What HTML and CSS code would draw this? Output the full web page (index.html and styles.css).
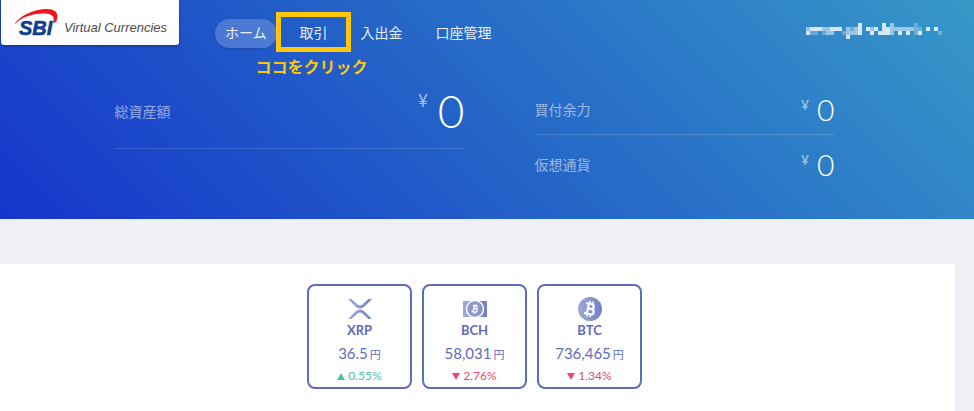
FILE: index.html
```html
<!DOCTYPE html>
<html lang="ja">
<head>
<meta charset="utf-8">
<meta name="viewport" content="width=device-width, initial-scale=1">
<title>SBI Virtual Currencies</title>
<link rel="stylesheet" href="styles.css">
</head>
<body>

<header class="header">
  <div class="topbar">
    <a class="logo" href="#">
      <svg class="logo-mark" viewBox="0 0 44 28" aria-hidden="true">
        <path d="M0 16C5 7 19 0 33 0c9 0 13 5 9 13l-3 1c2-6 0-9-8-9.500C19 4 7 8 0 16z" fill="#f5141e"/>
        <text class="logo-sbi" x="5" y="26">SBI</text>
      </svg>
      <span class="logo-name">Virtual Currencies</span>
    </a>
    <nav class="nav">
      <a class="nav-link is-current" href="#">ホーム</a>
      <a class="nav-link has-callout" href="#">取引<span class="callout-box"></span><span class="callout-text">ココをクリック</span></a>
      <a class="nav-link" href="#">入出金</a>
      <a class="nav-link" href="#">口座管理</a>
    </nav>
    <!-- masked user name -->
    <svg class="user" viewBox="0 0 34 4" shape-rendering="crispEdges" role="img" aria-label="ユーザー">
      <g fill="#fff">
        <path opacity=".8" d="M13 0h1v3h-1zM19 0h1v3h-1zM1 1h3v1h-3zM6 1h3v1h-3zM15 1h1v1h-1zM17 1h1v1h-1zM20 1h1v2h-1zM30 1h1v1h-1zM32 1h1v1h-1zM0 2h1v1h-1zM16 2h1v1h-1zM18 2h1v1h-1zM23 2h1v1h-1zM25 2h1v1h-1zM28 2h1v1h-1zM10 3h1v1h-1z"/>
        <path opacity=".5" d="M0 1h1v1h-1zM4 1h2v1h-2zM6 2h1v1h-1zM5 2h1v1h-1zM10 1h1v2h-1zM11 2h2v1h-2zM12 1h1v1h-1zM16 1h1v1h-1zM21 0h1v3h-1zM22 1h2v1h-2zM24 1h3v1h-3z"/>
        <path opacity=".28" d="M1 2h2v1h-2zM4 2h1v1h-1zM9 2h1v1h-1zM11 1h1v1h-1zM27 0h1v3h-1zM28 1h1v1h-1zM33 2h1v1h-1z"/>
      </g>
    </svg>
  </div>

  <div class="summary">
    <dl class="total">
      <div class="amount amount-large">
        <dt>総資産額</dt>
        <dd><span class="yen">¥</span><span class="value">0</span></dd>
      </div>
    </dl>
    <dl class="detail">
      <div class="amount">
        <dt>買付余力</dt>
        <dd><span class="yen">¥</span><span class="value">0</span></dd>
      </div>
      <div class="amount">
        <dt>仮想通貨</dt>
        <dd><span class="yen">¥</span><span class="value">0</span></dd>
      </div>
    </dl>
  </div>
</header>

<svg class="defs" width="0" height="0" aria-hidden="true">
  <defs>
    <linearGradient id="coin" x1="0" y1="0" x2="1" y2="0">
      <stop offset="0" stop-color="#a0aad8"/>
      <stop offset="1" stop-color="#7480c2"/>
    </linearGradient>
    <g id="bitcoin" fill="none" stroke="#fff" transform="rotate(12)">
      <path stroke-width="2.200" d="M-5-5H.8a2.400 2.400 0 0 1 0 4.800H-2M-2-.2h3.600a2.600 2.600 0 0 1 0 5.200H-5M-2.200-5V5"/>
      <path stroke-width="1.600" d="M-1.500-8v3M1.700-8v3M-1.500 5v3M1.700 5v3"/>
    </g>
  </defs>
</svg>

<main class="content">
  <ul class="rates">
    <li class="rate">
      <svg class="rate-icon" viewBox="0 0 24 24" aria-hidden="true">
        <path d="M0 2h3.500l6 5.500q2.500 2.200 5 0l6-5.500H24l-7.500 7.500q-4.500 3.800-9 0zM0 22h3.500l6-5.500q2.500-2.200 5 0l6 5.500H24l-7.500-7.500q-4.500-3.800-9 0z" fill="url(#coin)"/>
      </svg>
      <h2 class="rate-name">XRP</h2>
      <p class="rate-price">36.5<small>円</small></p>
      <p class="rate-change up">0.55%</p>
    </li>
    <li class="rate">
      <svg class="rate-icon" viewBox="0 0 24 24" aria-hidden="true">
        <path d="M0 4h24v16H0z" fill="url(#coin)"/>
        <circle cx="12" cy="12" r="8.500" fill="#8c97cd" stroke="#fff" stroke-width="1.500"/>
        <use href="#bitcoin" transform="translate(12 12) scale(.6)"/>
      </svg>
      <h2 class="rate-name">BCH</h2>
      <p class="rate-price">58,031<small>円</small></p>
      <p class="rate-change down">2.76%</p>
    </li>
    <li class="rate">
      <svg class="rate-icon" viewBox="0 0 24 24" aria-hidden="true">
        <circle cx="12" cy="12" r="12" fill="url(#coin)"/>
        <use href="#bitcoin" transform="translate(12 12)"/>
      </svg>
      <h2 class="rate-name">BTC</h2>
      <p class="rate-price">736,465<small>円</small></p>
      <p class="rate-change down">1.34%</p>
    </li>
  </ul>
</main>

</body>
</html>
```

FILE: styles.css
```css
* {
  box-sizing: border-box;
}
body {
  margin: 0;
  background: #eff0f6;
  font-family: Lato, "Noto Sans CJK JP", sans-serif;
}
a {
  color: inherit;
  text-decoration: none;
}
dl, dd, ul, h2, p {
  margin: 0;
  padding: 0;
}

/* header */
.header {
  padding-bottom: 30px;
  background: linear-gradient(45deg, #1535cb 0%, #2566c7 50%, #3798c7 100%);
  color: #fff;
}
.topbar {
  display: flex;
  align-items: flex-start;
  padding: 0 32px 0 1px;
}
.logo {
  display: flex;
  align-items: center;
  gap: 6px;
  width: 178px;
  height: 45px;
  padding-left: 13px;
  border-radius: 0 0 3px 3px;
  background: #fff;
  box-shadow: 0 1px 3px rgba(0, 0, 0, .3);
}
.logo-mark {
  flex: none;
  width: 44px;
  height: 28px;
  overflow: visible;
}
.logo-sbi {
  fill: #0f3f8c;
  stroke: #0f3f8c;
  stroke-width: .6px;
  font: italic bold 20px "Liberation Sans", sans-serif;
}
.logo-name {
  padding-top: 10px;
  color: #4c4c4c;
  font: italic 13px "Liberation Sans", sans-serif;
  white-space: nowrap;
}
.nav {
  display: flex;
  gap: 13px;
  margin: 19px auto 0 36px;
}
.nav-link {
  padding: 0 10px 2px;
  border-radius: 15px;
  color: #e9f0fb;
  font-size: 14px;
  line-height: 27px;
  white-space: nowrap;
}
.is-current {
  background: rgba(255, 255, 255, .2);
  box-shadow: 0 1px 3px rgba(0, 0, 0, .15);
}
.has-callout {
  position: relative;
}
.callout-box {
  position: absolute;
  top: -7px;
  right: -13px;
  bottom: -4px;
  left: -14px;
  border: 5px solid #ffc60b;
}
.callout-text {
  position: absolute;
  top: 34px;
  left: -34px;
  color: #ffc60b;
  font-size: 16px;
  font-weight: bold;
}
.user {
  width: 136px;
  height: 16px;
  margin-top: 23px;
}

/* balances */
.summary {
  display: flex;
  justify-content: center;
  gap: 70px;
  padding: 31px 25px 0 0;
}
.total {
  width: 350px;
}
.detail {
  width: 300px;
}
.amount {
  display: flex;
  align-items: center;
  justify-content: space-between;
  height: 55px;
  padding-top: 4px;
}
.amount + .amount {
  border-top: 1px solid rgba(255, 255, 255, .15);
}
.amount-large {
  height: 70px;
  padding: 0 0 6px;
  border-bottom: 1px solid rgba(255, 255, 255, .15);
}
.amount dt {
  color: rgba(255, 255, 255, .55);
  font-size: 14px;
}
.amount dd {
  display: flex;
  align-items: flex-start;
  gap: 8px;
}
.yen {
  color: rgba(255, 255, 255, .6);
  font-size: 14px;
  line-height: 26px;
}
.value {
  font-size: 30px;
  font-weight: 300;
  line-height: 34px;
}
.amount-large dd {
  gap: 10px;
}
.amount-large .yen {
  font-size: 17px;
  line-height: 28px;
}
.amount-large .value {
  font-size: 46px;
  line-height: 48px;
}

/* rates */
.defs {
  display: block;
}
.content {
  min-height: 147px;
  margin: 45px 19px 0 0;
  padding: 20px 7px 22px 0;
  background: #fff;
}
.rates {
  display: flex;
  justify-content: center;
  gap: 10px;
  list-style: none;
}
.rate {
  width: 105px;
  height: 105px;
  padding: 11px 0 0 1px;
  border: 2px solid #5f6bbd;
  border-radius: 8px;
  color: #5f6bbd;
  text-align: center;
}
.rate-icon {
  display: block;
  width: 24px;
  height: 24px;
  margin: 0 auto;
}
.rate-name {
  font-size: 13px;
  line-height: 18px;
}
.rate-price {
  font-size: 15px;
  line-height: 28px;
}
.rate-price small {
  margin-left: 2px;
  font-size: 11px;
}
.rate-change {
  font-size: 12px;
  line-height: 14px;
}
.rate-change::before {
  content: "";
  display: inline-block;
  margin-right: 3px;
  border: 4px solid transparent;
}
.up {
  color: #4dbfa6;
}
.up::before {
  border-top: 0;
  border-bottom: 7px solid #4dbfa6;
}
.down {
  color: #e84a6c;
}
.down::before {
  border-top: 7px solid #e84a6c;
  border-bottom: 0;
}
```
